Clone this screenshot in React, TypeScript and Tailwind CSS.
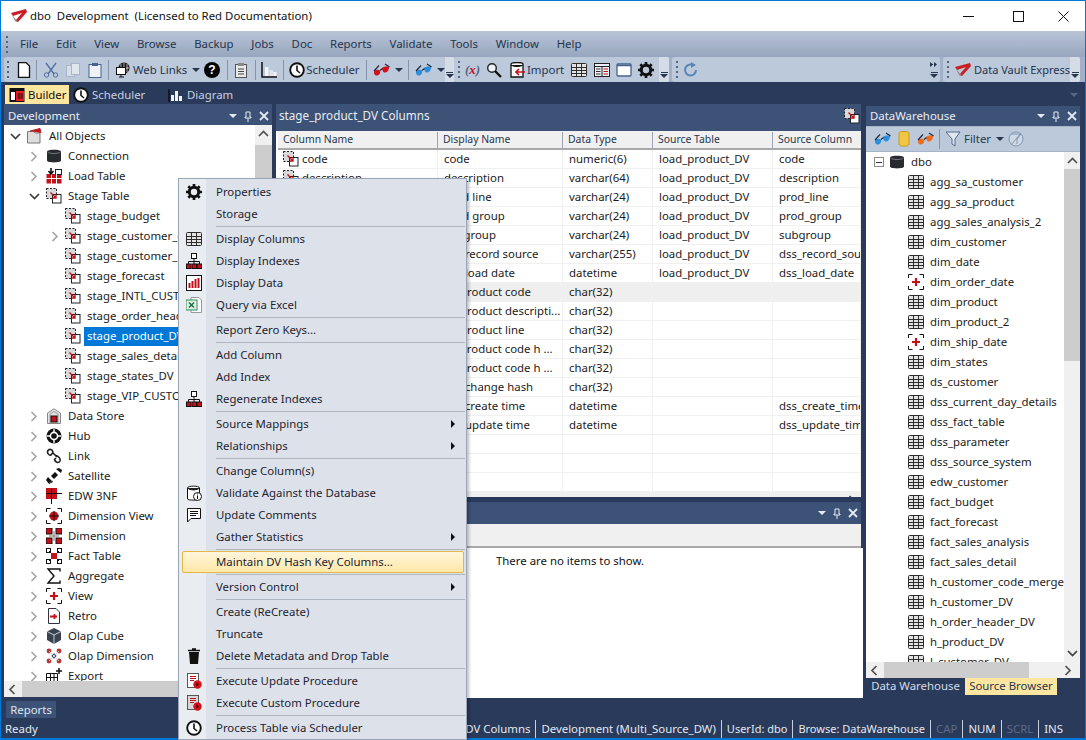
import React from "react";

type IP = { className?: string };
const S = ({ className = "", w = 16, h = 16, children }: { className?: string; w?: number; h?: number; children: React.ReactNode }) => (
  <svg width={w} height={h} viewBox={`0 0 ${w} ${h}`} fill="none" className={`shrink-0 ${className}`}>{children}</svg>
);
const R = "#c2111a";
const D = "#1d2129";

const Logo = ({ className }: IP) => (
  <S className={className} w={18} h={14}>
    <path d="M1 4 L16 0 L17 3 L8 13 L5 12 L12 4 L3 7 Z" fill="#c81e25" />
    <path d="M1 4 L5 12 L8 13 L3 7 Z" fill="#8d8d8d" />
  </S>
);
const Stage = ({ className }: IP) => (
  <S className={className}>
    <rect x="0.5" y="0.5" width="10" height="10" fill="#d8d8d8" stroke={D} strokeDasharray="2 1.5" />
    <rect x="6.5" y="6.5" width="8.5" height="8.5" fill="#fff" stroke={D} />
    <path d="M4.500 4.500L10 10M10 6.500V10H6.500" stroke={R} strokeWidth="1.400" />
  </S>
);
const Grid = ({ className }: IP) => (
  <S className={className}>
    <rect x="0.5" y="1.5" width="15" height="13" rx="1" fill="#e3e3e3" stroke="#2c2c2c" />
    <path d="M0.5 5.5H15.5M0.5 8.5H15.5M0.5 11.5H15.5M5.5 1.5V14.5M10.5 1.5V14.5" stroke="#2c2c2c" />
  </S>
);
const Cyl = ({ className }: IP) => (
  <S className={className}>
    <path d="M1 3.5C1 1 15 1 15 3.5V12.5C15 15 1 15 1 12.5Z" fill="#272b30" />
    <path d="M1.5 4C4 6 12 6 14.5 4" stroke="#777" />
  </S>
);
const Load = ({ className }: IP) => (
  <S className={className}>
    <rect x="0.5" y="6" width="15" height="9.5" fill={R} />
    <rect x="9.5" y="1.5" width="6" height="5" fill="#fff" stroke={D} />
    <path d="M0 10.5H16M5.5 6V16M10.5 6V16" stroke="#fff" />
    <path d="M5 0V6M2.5 3L5 6L7.5 3" stroke="#111" strokeWidth="1.6" />
  </S>
);
const Store = ({ className }: IP) => (
  <S className={className}>
    <path d="M1.5 15.5V5L8 0.8L14.5 5V15.5Z" fill="#e4e4e4" stroke="#888" />
    <path d="M4 15V6L8 3.5L12 6V15" stroke="#999" />
    <rect x="5" y="8" width="6" height="6" fill={R} stroke="#111" />
  </S>
);
const Hub = ({ className }: IP) => (
  <S className={className}>
    <circle cx="8" cy="8" r="7.5" fill="#111" />
    <circle cx="8" cy="8" r="3.6" stroke="#fff" strokeWidth="1.6" />
    <path d="M1 8H4M12 8H15M8 1V4M8 12V15" stroke="#fff" strokeWidth="1.3" />
  </S>
);
const Chain = ({ className }: IP) => (
  <S className={className}>
    <path d="M2 2.5C4-.5 8 3 6.5 5L5 7C3 7.500 .5 5 2 2.500Z M7 5L11 9 M9 8C11 6.500 15 10.500 14 13 C12.500 16 9 14 8.500 11.500 L10 10" stroke="#222" strokeWidth="1.6" />
  </S>
);
const Sat = ({ className }: IP) => (
  <S className={className}>
    <path d="M2 9L7 14L3 16L0 12Z M10 1L15 5L16 2L13 0Z" fill="#111" />
    <path d="M5 8L9 4L12 7L8 11Z" fill="#111" />
    <path d="M7 13L3 15" stroke="#555" />
  </S>
);
const Edw = ({ className }: IP) => (
  <S className={className}>
    <rect x="0" y="0" width="11" height="11" fill={R} />
    <path d="M5.500 0V16M0 5.500H16" stroke="#111" />
  </S>
);
const Brk = ({ children, className }: { children: React.ReactNode; className?: string }) => (
  <S className={className}>
    <path d="M0.5 4V0.500H4.500M11.500 0.500H15.500V4M15.500 12V15.500H11.500M4.500 15.500H0.500V12" stroke="#111" />
    {children}
  </S>
);
const DimV = ({ className }: IP) => (
  <Brk className={className}>
    <circle cx="8" cy="8" r="4.500" fill={R} />
    <path d="M8 3V13M3 8H13" stroke="#111" />
  </Brk>
);
const Dim = ({ className }: IP) => (
  <S className={className}>
    <rect x="0" y="0" width="6" height="6" fill={R} stroke="#111" />
    <rect x="10" y="0" width="6" height="6" fill={R} stroke="#111" />
    <rect x="0" y="10" width="6" height="6" fill={R} stroke="#111" />
    <rect x="10" y="10" width="6" height="6" fill={R} stroke="#111" />
    <path d="M3 8H13M8 3V13" stroke="#777" />
  </S>
);
const Fact = ({ className }: IP) => (
  <S className={className}>
    <rect x="0.500" y="0.500" width="4" height="4" fill="#fff" stroke="#111" />
    <rect x="11.500" y="0.500" width="4" height="4" fill="#fff" stroke="#111" />
    <rect x="0.500" y="11.500" width="4" height="4" fill="#fff" stroke="#111" />
    <rect x="11.500" y="11.500" width="4" height="4" fill="#fff" stroke="#111" />
    <path d="M3 3L13 13M13 3L3 13" stroke="#111" />
    <rect x="5" y="5" width="6" height="6" fill={R} />
  </S>
);
const Sigma = ({ className }: IP) => (
  <S className={className}>
    <path d="M14 3.500V1H2L8 8L2 15H14V12.500" stroke="#111" strokeWidth="1.400" />
  </S>
);
const ViewI = ({ className }: IP) => (
  <Brk className={className}>
    <path d="M8 4V12M4 8H12" stroke={R} strokeWidth="2.200" />
  </Brk>
);
const Retro = ({ className }: IP) => (
  <S className={className}>
    <path d="M2.500 0.500H10L13.500 4V15.500H2.500Z" fill="#fff" stroke="#334" />
    <path d="M4 8.500H11M8.500 6V11" stroke={R} strokeWidth="1.800" />
  </S>
);
const Cube = ({ className }: IP) => (
  <S className={className}>
    <path d="M8 0L15 3.500V12L8 16L1 12V3.500Z" fill="#39424e" />
    <path d="M1 3.500L8 7L15 3.500M8 7V16" stroke="#c8cdd4" />
  </S>
);
const OlapD = ({ className }: IP) => (
  <S className={className}>
    <circle cx="3" cy="3" r="2.400" fill="#b33" />
    <circle cx="13" cy="3" r="2.400" fill="#b33" />
    <circle cx="3" cy="13" r="2.400" fill="#b33" />
    <circle cx="13" cy="13" r="2.400" fill="#b33" />
    <circle cx="8" cy="8" r="2.400" fill="#3d566e" />
    <path d="M3 3L13 13M13 3L3 13" stroke="#ccc" />
  </S>
);
const Export = ({ className }: IP) => (
  <S className={className}>
    <path d="M0.500 15V5.500H11.500V15M0.500 9.500H11.500M4.500 5.500V15M8 5.500V15" stroke="#111" />
    <path d="M13 0V6M10 3H16" stroke="#111" strokeWidth="1.500" />
  </S>
);
const Gear = ({ className }: IP) => (
  <S className={className}>
    <circle cx="8" cy="8" r="4.700" stroke="#111" strokeWidth="3" />
    <path d="M8 0V3M8 13V16M0 8H3M13 8H16M2.300 2.300L4.400 4.400M11.600 11.600L13.700 13.700M13.700 2.300L11.600 4.400M4.400 11.600L2.300 13.700" stroke="#111" strokeWidth="2.700" />
  </S>
);
const Org = ({ className }: IP) => (
  <S className={className}>
    <rect x="5.500" y="0.500" width="5" height="5" fill="#fff" stroke="#111" />
    <path d="M8 5.500V9M2.500 11V8.500H13.500V11M8 9V11" stroke="#111" />
    <rect x="0.500" y="11" width="4.500" height="4.500" fill={R} stroke="#111" />
    <rect x="6" y="11" width="4.500" height="4.500" fill={R} stroke="#111" />
    <rect x="11.300" y="11" width="4.500" height="4.500" fill={R} stroke="#111" />
  </S>
);
const Bars = ({ className }: IP) => (
  <S className={className}>
    <rect x="0.500" y="0.500" width="15" height="15" fill="#fff" stroke="#111" />
    <path d="M3.500 13V8M6.500 13V6M9.500 13V4M12.500 13V3" stroke={R} strokeWidth="2" />
  </S>
);
const Excel = ({ className }: IP) => (
  <S className={className}>
    <path d="M5 0.500H13L15.500 3V15.500H5Z" fill="#fff" stroke="#999" />
    <rect x="0" y="3" width="11" height="10" fill="#e2f0e4" stroke="#2e8b57" />
    <path d="M3 5.500L8 10.500M8 5.500L3 10.500" stroke="#1d6f42" strokeWidth="1.500" />
  </S>
);
const DbInfo = ({ className }: IP) => (
  <S className={className}>
    <path d="M1.500 3C1.500 .5 13.500 .5 13.500 3V14C13.500 15.500 1.500 15.500 1.500 14Z" fill="#fff" stroke="#111" />
    <path d="M1.500 3C4 5.500 11 5.500 13.500 3" stroke="#111" fill="#222" />
    <circle cx="11.500" cy="11.500" r="4" fill="#fff" stroke="#111" />
    <path d="M11.500 10.500V14M11.500 8.500V9.500" stroke="#111" />
  </S>
);
const Comment = ({ className }: IP) => (
  <S className={className}>
    <path d="M1.500 1.500H14.500V11.500H5L1.500 15Z" fill="#fff" stroke="#111" />
    <path d="M4 4.500H12M4 6.500H12M4 8.500H10" stroke="#111" />
  </S>
);
const Trash = ({ className }: IP) => (
  <S className={className}>
    <path d="M3 4H13L12 16H4Z" fill="#111" />
    <path d="M2 2.500H14M6 1H10" stroke="#111" strokeWidth="1.600" />
  </S>
);
const Proc = ({ className, grey }: IP & { grey?: boolean }) => (
  <S className={className}>
    <rect x="1.500" y="0.500" width="11" height="14" fill={grey ? "#d8d8d8" : "#fff"} stroke="#555" />
    <path d="M4 3.500H10M4 5.500H10M4 7.500H8" stroke={R} />
    <circle cx="11.500" cy="11.500" r="4.200" fill="#d8101a" />
    <path d="M10.500 9.500L13 11.500L10.500 13.500Z" fill="#111" />
  </S>
);
const Clock = ({ className }: IP) => (
  <S className={className}>
    <circle cx="8" cy="8" r="6.800" fill="#fff" stroke="#111" strokeWidth="1.900" />
    <path d="M8 3.500V8.500L11 11" stroke="#111" strokeWidth="1.600" />
  </S>
);
const Glasses = ({ className, c }: IP & { c: string }) => (
  <S className={className} w={18} h={14}>
    <path d="M1 9C1 7 5 6 7 7.500C8 11 5 13 3 12.500C1.500 12 1 11 1 9Z" fill={c} />
    <path d="M9 5C11 3 15 3 16 4.500C16 8 13 10 11 9.500C10 9 9 7 9 5Z" fill={c} />
    <path d="M1 8L6 2.500M7 7.500L9.500 5.500M16.500 4L12 1" stroke="#1f2a3a" strokeWidth="1.200" />
  </S>
);
const Caret = ({ className = "" }: IP) => (
  <span className={`shrink-0 w-0 h-0 border-l-[4px] border-r-[4px] border-t-[4px] border-l-transparent border-r-transparent border-t-[#26364f] ${className}`} />
);
const Grip = ({ className = "" }: IP) => (
  <span className={`shrink-0 flex flex-col gap-[3px] ${className}`}>
    <i className="block w-[2px] h-[2px] bg-[#56657e]" />
    <i className="block w-[2px] h-[2px] bg-[#56657e]" />
    <i className="block w-[2px] h-[2px] bg-[#56657e]" />
    <i className="block w-[2px] h-[2px] bg-[#56657e]" />
  </span>
);
const Sep = ({ className = "" }: IP) => <span className={`shrink-0 w-px h-[20px] bg-[#8594aa] ${className}`} />;
const Over = ({ className = "" }: IP) => (
  <span className={`shrink-0 self-stretch w-[10px] flex flex-col items-center justify-end pb-[4px] gap-[1px] rounded-r-[2px] ${className}`}>
    <i className="block w-[7px] h-px bg-[#26364f]" />
    <Caret className="border-l-[3px] border-r-[3px] border-t-[3px]" />
  </span>
);
const Chev = ({ dir = "r", className = "" }: IP & { dir?: "r" | "d" | "l" | "u" }) => {
  const p = { r: "M2.500 1L7 5.500L2.500 10", d: "M1 3L5.500 7.500L10 3", l: "M7.500 1L3 5.500L7.500 10", u: "M1 8L5.500 3.500L10 8" }[dir];
  const col = dir === "d" ? "#3f3f3f" : dir === "r" ? "#a6a6a6" : "#505050";
  return (
    <svg width="11" height="11" viewBox="0 0 11 11" fill="none" className={`shrink-0 ${className}`}>
      <path d={p} stroke={col} strokeWidth="1.700" />
    </svg>
  );
};
const PaneBtns = () => (
  <span className="ml-auto flex items-center gap-[7px] mr-[3px]">
    <Caret className="border-t-[#e6ebf3] border-l-[3px] border-r-[3px] border-t-[3px]" />
    <svg width="8" height="11" viewBox="0 0 8 11" fill="none"><path d="M2 1H6V6H7V7H1V6H2ZM4 7V11" stroke="#e6ebf3" /></svg>
    <svg width="10" height="10" viewBox="0 0 10 10" fill="none"><path d="M1 1L9 9M9 1L1 9" stroke="#e6ebf3" strokeWidth="1.800" /></svg>
  </span>
);

const menus = ["File", "Edit", "View", "Browse", "Backup", "Jobs", "Doc", "Reports", "Validate", "Tools", "Window", "Help"];

const treeTop: [React.FC<IP>, string][] = [
  [Cyl, "Connection"],
  [Load, "Load Table"],
];
const stages: [string, boolean?, boolean?][] = [
  ["stage_budget"],
  ["stage_customer_code_merge", true],
  ["stage_customer_DV"],
  ["stage_forecast"],
  ["stage_INTL_CUSTOMERS"],
  ["stage_order_header_DV"],
  ["stage_product_DV", false, true],
  ["stage_sales_detail_DV"],
  ["stage_states_DV"],
  ["stage_VIP_CUSTOMERS"],
];
const treeBottom: [React.FC<IP>, string][] = [
  [Store, "Data Store"],
  [Hub, "Hub"],
  [Chain, "Link"],
  [Sat, "Satellite"],
  [Edw, "EDW 3NF"],
  [DimV, "Dimension View"],
  [Dim, "Dimension"],
  [Fact, "Fact Table"],
  [Sigma, "Aggregate"],
  [ViewI, "View"],
  [Retro, "Retro"],
  [Cube, "Olap Cube"],
  [OlapD, "Olap Dimension"],
  [Export, "Export"],
];

const columns = [
  ["code", "code", "numeric(6)", "load_product_DV", "code"],
  ["description", "description", "varchar(64)", "load_product_DV", "description"],
  ["prod_line", "prod line", "varchar(24)", "load_product_DV", "prod_line"],
  ["prod_group", "prod group", "varchar(24)", "load_product_DV", "prod_group"],
  ["subgroup", "subgroup", "varchar(24)", "load_product_DV", "subgroup"],
  ["dss_record_source", "dss record source", "varchar(255)", "load_product_DV", "dss_record_source"],
  ["dss_load_date", "dss load date", "datetime", "load_product_DV", "dss_load_date"],
  ["hk_product_code", "hk product code", "char(32)", "", ""],
  ["hk_product_description", "hk product descripti...", "char(32)", "", ""],
  ["hk_product_line", "hk product line", "char(32)", "", ""],
  ["hk_product_code_h", "dv product code h ...", "char(32)", "", ""],
  ["hk_product_code_h2", "dv product code h ...", "char(32)", "", ""],
  ["dss_change_hash", "dss change hash", "char(32)", "", ""],
  ["dss_create_time", "dss create time", "datetime", "", "dss_create_time"],
  ["dss_update_time", "dss update time", "datetime", "", "dss_update_time"],
  ["", "", "", "", ""],
  ["", "", "", "", ""],
  ["", "", "", "", ""],
];
const colW = ["w-[160px]", "w-[125px]", "w-[90px]", "w-[120px]", "flex-1"];

const dw: [string, boolean?][] = [
  ["agg_sa_customer"], ["agg_sa_product"], ["agg_sales_analysis_2"], ["dim_customer"], ["dim_date"],
  ["dim_order_date", true], ["dim_product"], ["dim_product_2"], ["dim_ship_date", true], ["dim_states"],
  ["ds_customer"], ["dss_current_day_details"], ["dss_fact_table"], ["dss_parameter"], ["dss_source_system"],
  ["edw_customer"], ["fact_budget"], ["fact_forecast"], ["fact_sales_analysis"], ["fact_sales_detail"],
  ["h_customer_code_merge"], ["h_customer_DV"], ["h_order_header_DV"], ["h_product_DV"], ["l_customer_DV"],
];

type M = { t?: string; i?: React.ReactNode; sub?: boolean; hot?: boolean } | "sep";
const menu: M[] = [
  { t: "Properties", i: <Gear /> }, { t: "Storage" }, "sep",
  { t: "Display Columns", i: <Grid /> }, { t: "Display Indexes", i: <Org /> }, { t: "Display Data", i: <Bars /> }, { t: "Query via Excel", i: <Excel /> }, "sep",
  { t: "Report Zero Keys..." }, "sep",
  { t: "Add Column" }, { t: "Add Index" }, { t: "Regenerate Indexes", i: <Org /> }, "sep",
  { t: "Source Mappings", sub: true }, { t: "Relationships", sub: true }, "sep",
  { t: "Change Column(s)" }, { t: "Validate Against the Database", i: <DbInfo /> }, { t: "Update Comments", i: <Comment /> }, { t: "Gather Statistics", sub: true }, "sep",
  { t: "Maintain DV Hash Key Columns...", hot: true }, "sep",
  { t: "Version Control", sub: true }, "sep",
  { t: "Create (ReCreate)" }, { t: "Truncate" }, { t: "Delete Metadata and Drop Table", i: <Trash /> }, "sep",
  { t: "Execute Update Procedure", i: <Proc /> }, { t: "Execute Custom Procedure", i: <Proc grey /> }, "sep",
  { t: "Process Table via Scheduler", i: <Clock /> },
];

const status: [string, boolean?, boolean?][] = [
  ["stage_product_DV Columns"], ["Development (Multi_Source_DW)"], ["UserId: dbo", false, true], ["Browse: DataWarehouse", false, true], ["CAP", true], ["NUM"], ["SCRL", true], ["INS"],
];

export default function App() {
  return (
    <div className="relative w-[1086px] h-[740px] overflow-hidden flex flex-col bg-[#2a3a5a] border-x border-t border-[#0078d7] font-['Noto_Sans',sans-serif] text-[11.4px] leading-none text-[#1b1b1b]">
      {/* title */}
      <div className="h-[30px] shrink-0 bg-white flex items-center text-[#111]">
        <Logo className="ml-[9px]" />
        <span className="ml-[2px] whitespace-pre">dbo  Development  (Licensed to Red Documentation)</span>
        <svg width="11" height="11" viewBox="0 0 11 11" className="ml-auto mr-[39px]"><path d="M0 5.500H11" stroke="#111" /></svg>
        <svg width="11" height="11" viewBox="0 0 11 11" fill="none" className="mr-[34px]"><rect x="0.500" y="0.500" width="10" height="10" stroke="#111" /></svg>
        <svg width="11" height="11" viewBox="0 0 11 11" fill="none" className="mr-[16px]"><path d="M0.500 0.500L10.500 10.500M10.500 0.500L0.500 10.500" stroke="#111" /></svg>
      </div>
      {/* menu */}
      <div className="h-[26px] shrink-0 bg-gradient-to-b from-[#b9c4d6] to-[#97a6be] flex items-center pl-[5px] text-[#24344f]">
        <Grip className="mr-[12px]" />
        <div className="flex gap-[17.8px]">
          {menus.map((m) => <span key={m}>{m}</span>)}
        </div>
      </div>
      {/* toolbars */}
      <div className="h-[25px] shrink-0 bg-[#a3b1c6] flex pr-[5px] pl-[3px] gap-[3px] text-[#24344f] whitespace-nowrap">
        <div className="w-[447px] bg-[#bcc9da] rounded-[3px] flex items-center pl-[3px]">
          <Grip />
          <S className="ml-[7px]"><path d="M2.500 .5H10L13.500 4V15.500H2.500Z" fill="#fff" stroke="#111" strokeWidth="1.300" /></S>
          <Sep className="ml-[4px]" />
          <S className="ml-[6px]"><path d="M3 1L11 12M13 1L5 12" stroke="#4f6f9d" strokeWidth="1.300" /><circle cx="3.500" cy="13" r="2.200" stroke="#4f6f9d" /><circle cx="12.500" cy="13" r="2.200" stroke="#4f6f9d" /></S>
          <S className="ml-[6px]"><rect x="1.500" y="3.500" width="8" height="11" fill="#d7dfe9" stroke="#a9b6c8" /><rect x="6.500" y="1.500" width="8" height="11" fill="#dfe6ee" stroke="#a9b6c8" /></S>
          <S className="ml-[6px]"><rect x="2" y="2.500" width="12" height="13" fill="#eef2f6" stroke="#44638f" /><rect x="5" y="1" width="6" height="3" fill="#44638f" /></S>
          <Sep className="ml-[5px]" />
          <S className="ml-[6px]"><circle cx="9" cy="6" r="5.500" fill="#111" /><path d="M4 6H14M9 1V11M6 2L6 10M12 2V10" stroke="#fff" strokeWidth=".7" /><rect x="1.500" y="5.500" width="9" height="7" fill="#fff" stroke="#111" /><path d="M4 15H9M6 13V15" stroke="#111" /></S>
          <span className="ml-[2px]">Web Links</span>
          <Caret className="ml-[5px]" />
          <S className="ml-[4px]"><circle cx="8" cy="8" r="8" fill="#050505" /><text x="8" y="12" textAnchor="middle" fontSize="12" fontWeight="700" fill="#fff" fontFamily="Liberation Sans">?</text></S>
          <Sep className="ml-[7px]" />
          <S className="ml-[5px]"><rect x="2.500" y="2.500" width="11" height="13" fill="#e9e9e9" stroke="#555" /><rect x="5" y="1" width="6" height="3" fill="#888" /><path d="M5 7H11M5 9.500H11M5 12H11" stroke="#444" /></S>
          <Sep className="ml-[6px]" />
          <S className="ml-[5px]"><path d="M1 0V15H16" stroke="#111" strokeWidth="1.500" /><rect x="4" y="5" width="3.500" height="9" fill="#f5f5f5" /><rect x="8.500" y="8" width="3.500" height="6" fill="#dfe5ec" /><rect x="12.500" y="10" width="3" height="4" fill="#f5f5f5" /></S>
          <Sep className="ml-[6px]" />
          <Clock className="ml-[5px]" />
          <span className="ml-[1px]">Scheduler</span>
          <Sep className="ml-[6px]" />
          <Glasses c="#d6101a" className="ml-[6px]" />
          <Caret className="ml-[4px]" />
          <Sep className="ml-[5px]" />
          <Glasses c="#2a8fdc" className="ml-[6px]" />
          <Caret className="ml-[4px]" />
          <Over className="ml-auto bg-[#d3dce7]" />
        </div>
        <div className="w-[216px] bg-[#bcc9da] rounded-[3px] flex items-center pl-[4px]">
          <Grip />
          <span className="ml-[5px] w-[16px] text-[13px] font-bold italic text-[#52667f] font-['Liberation_Serif',serif] whitespace-pre">(<span className="text-[#c2111a]">x</span>)</span>
          <S className="ml-[5px]"><circle cx="6" cy="6" r="4.300" fill="#eef2f7" stroke="#222" strokeWidth="1.400" /><path d="M9 9L15 15" stroke="#111" strokeWidth="2.400" /></S>
          <S className="ml-[7px]"><path d="M2 2C2 0 14 0 14 2V15H2Z" fill="#fff" stroke="#111" strokeWidth="1.300" /><path d="M2 3C5 5 11 5 14 3" fill="#111" stroke="#111" /><path d="M16 10H7M10 7L7 10L10 13" stroke={R} strokeWidth="1.700" /></S>
          <span className="ml-[2px]">Import</span>
          <Grid className="ml-[7px]" />
          <S className="ml-[7px]"><rect x="0.500" y="1.500" width="15" height="13" fill="#edf0f4" stroke="#222" /><path d="M0.500 4.500H15.500M8 4.500V14.500" stroke="#222" /><path d="M2 7H6.500M2 9.500H6.500M2 12H6.500" stroke="#333" /><path d="M9.500 7H14M9.500 9.500H14M9.500 12H14" stroke={R} /></S>
          <S className="ml-[6px]"><rect x="1" y="2" width="14" height="12" rx="1" fill="#fff" stroke="#44618c" strokeWidth="1.300" /><path d="M1 3.500H15" stroke="#44618c" strokeWidth="1.500" /></S>
          <Gear className="ml-[6px]" />
          <Over className="ml-auto bg-[#d3dce7]" />
        </div>
        <div className="w-[269px] bg-[#bcc9da] rounded-[3px] flex items-center pl-[4px]">
          <Grip />
          <S className="ml-[5px]"><path d="M13 8A5.500 5.500 0 1 1 9 2.700" stroke="#5a83b8" strokeWidth="2" /><path d="M8 0L13 3L8 6Z" fill="#5a83b8" /></S>
          <span className="ml-auto self-stretch flex flex-col items-center justify-between py-[4px] pr-[1px]">
            <svg width="8" height="7" viewBox="0 0 8 7"><path d="M0 1L3 3.500L0 6ZM4 1L7 3.500L4 6Z" fill="#26364f" /><path d="M3 3.500H0" stroke="#26364f" /></svg>
            <Over className="!self-auto !pb-0" />
          </span>
        </div>
        <div className="flex-1 bg-[#bcc9da] rounded-[3px] flex items-center pl-[4px]">
          <Grip />
          <Logo className="ml-[5px]" />
          <span className="ml-[2px] text-[11px]">Data Vault Express</span>
          <Over className="ml-auto bg-[#d3dce7]" />
        </div>
      </div>
      {/* doc tabs */}
      <div className="h-[22px] shrink-0 flex items-center pl-[4px] pt-[3px] text-[#c7d1e0] relative">
        <span className="h-[19px] w-[64px] bg-[#ffe6a0] flex items-center pl-[4px] gap-[3px] text-[#111]">
          <S><rect x="0.500" y="1" width="15" height="14" fill="#111" /><rect x="2" y="5" width="4" height="8" fill="#fff" /><rect x="7" y="4" width="8" height="10" fill="#ef1c24" /><path d="M8.500 7H14M8.500 9H14M8.500 11H14" stroke="#111" /></S>
          Builder
        </span>
        <span className="ml-[4px] flex items-center gap-[3px] w-[95px]"><Clock />Scheduler</span>
        <span className="flex items-center gap-[3px]">
          <S><path d="M1 2V15" stroke="#111" strokeWidth="1.500" /><rect x="3" y="8" width="3" height="6" fill="#f4f4f4" /><rect x="7" y="4" width="3" height="10" fill="#f4f4f4" /><rect x="11" y="9" width="3" height="5" fill="#f4f4f4" /></S>
          Diagram
        </span>
        <Caret className="ml-auto mr-[7px] border-t-[#566885]" />
      </div>
      {/* main */}
      <div className="flex-1 min-h-0 flex pl-[3px] pr-[5px]">
        {/* left */}
        <div className="w-[268px] shrink-0 flex flex-col">
          <div className="h-[21px] shrink-0 bg-[#3d5277] flex items-center pl-[4px] pt-[3px] text-[#e8edf4]">
            Development<PaneBtns />
          </div>
          <div className="h-[556px] shrink-0 bg-white flex overflow-hidden">
            <div className="flex-1 min-w-0 pt-[1px] overflow-hidden">
              <TreeRow pad="pl-[6px]" chev="d" icon={<S className="ml-[6px]"><path d="M.5 3.500H7L8 5H13V15H.5Z" fill="#ddd" stroke="#777" /><path d="M3 3L13 .5L14 5" fill="#c9141c" stroke="#a22" /></S>} text="All Objects" />
              {treeTop.map(([I, t]) => <TreeRow key={t} pad="pl-[25px]" chev="r" icon={<I className="ml-[6px]" />} text={t} />)}
              <TreeRow pad="pl-[25px]" chev="d" icon={<Stage className="ml-[6px]" />} text="Stage Table" />
              {stages.map(([t, ch, sel]) => (
                <TreeRow key={t} pad="pl-[46px]" chev={ch ? "r" : undefined} icon={<Stage className={ch ? "ml-[4px]" : "ml-[15px]"} />} text={t} sel={sel} />
              ))}
              {treeBottom.map(([I, t]) => <TreeRow key={t} pad="pl-[25px]" chev="r" icon={<I className="ml-[6px]" />} text={t} />)}
            </div>
            <div className="w-[17px] shrink-0 bg-[#f0f0f0] flex flex-col items-center">
              <Chev dir="u" className="mt-[3px]" />
              <div className="w-full h-[170px] mt-[6px] bg-[#cdcdcd]" />
            </div>
          </div>
          <div className="h-[16px] shrink-0 bg-[#f0f0f0] flex items-center">
            <Chev dir="l" className="ml-[3px]" />
            <div className="ml-[4px] flex-1 h-full bg-[#cdcdcd] mr-[18px]" />
          </div>
          <div className="flex-1 flex items-end pl-[2px] pb-[1px]">
            <span className="h-[17px] w-[50px] bg-[#3d5277] rounded-t-[1px] flex items-center justify-center text-[#dfe6f0]">Reports</span>
          </div>
        </div>
        {/* center */}
        <div className="ml-[4px] w-[585px] shrink-0 flex flex-col">
          <div className="h-[27px] shrink-0 bg-[#3d5277] flex items-center pl-[3px] pb-[3px] text-[11.7px] text-[#e8edf4] relative">
            stage_product_DV Columns
            <Stage className="ml-auto mr-[1px]" />
          </div>
          <div className="h-[366px] shrink-0 bg-white flex flex-col pl-[2px] overflow-hidden">
            <div className="h-[19px] shrink-0 bg-[#f0f0f0] border-b-[2px] border-[#a9a9a9] flex items-center text-[10.4px] text-[#26364f]">
              {["Column Name", "Display Name", "Data Type", "Source Table", "Source Column"].map((h, i) => (
                <span key={h} className={`${colW[i]} h-[16px] flex items-center pl-[5px] ${i < 4 ? "border-r border-[#9aa3af]" : ""}`}>{h}</span>
              ))}
            </div>
            {columns.map((r, ri) => (
              <div key={ri} className={`h-[19px] shrink-0 flex items-center border-b border-[#f0f0f0] ${ri === 7 ? "bg-[#efefef]" : ""}`}>
                {r.map((c, i) => (
                  <span key={i} className={`${colW[i]} h-full flex items-center border-r border-[#f0f0f0] whitespace-nowrap overflow-hidden ${i === 0 ? "pl-[5px]" : "pl-[6px]"}`}>
                    {i === 0 && ri < 15 ? <Stage className="mr-[3px]" /> : null}{c}
                  </span>
                ))}
              </div>
            ))}
            <div className="mt-auto h-[16px] shrink-0 bg-[#f0f0f0] flex items-center justify-end pr-[3px]"><Chev dir="r" className="[&>path]:stroke-[#505050]" /></div>
          </div>
          <div className="h-[5px] shrink-0" />
          <div className="h-[22px] shrink-0 bg-[#3d5277] flex items-center"><PaneBtns /></div>
          <div className="h-[24px] shrink-0 bg-[#f0f0f0] border-b-[2px] border-[#a9a9a9]" />
          <div className="h-[150px] shrink-0 bg-white pl-[220px] pt-[7px] w-[587px] text-[#111]">There are no items to show.</div>
        </div>
        {/* right */}
        <div className="ml-[5px] flex-1 min-w-0 flex flex-col">
          <div className="h-[20px] mt-[2px] shrink-0 bg-[#3d5277] flex items-center pl-[4px] text-[#e8edf4]">
            DataWarehouse<PaneBtns />
          </div>
          <div className="h-[26px] shrink-0 bg-[#bcc9da] border-y border-[#a6b4c8] flex items-center pl-[8px] text-[#26364f]">
            <Glasses c="#2a8fdc" />
            <S className="ml-[4px]"><path d="M3 2C3 0 13 0 13 2V13C13 16 3 16 3 13Z" fill="#f4c542" stroke="#c99a22" /></S>
            <Glasses c="#ef6a1a" className="ml-[5px]" />
            <Sep className="ml-[4px]" />
            <S className="ml-[6px]"><path d="M0 1H14L9 8V15L6 13V8Z" fill="#dfe7f0" stroke="#506a8e" /></S>
            <span className="ml-[2px]">Filter</span>
            <Caret className="ml-[5px]" />
            <S className="ml-[4px]"><circle cx="8" cy="8" r="7" fill="#cfd9e5" stroke="#8096b3" /><path d="M3 3H13L9 8V13M3 14L13 2" stroke="#8096b3" /></S>
          </div>
          <div className="h-[510px] shrink-0 bg-white flex overflow-hidden">
            <div className="flex-1 min-w-0 overflow-hidden">
              <div className="h-[20px] flex items-center pl-[8px]">
                <span className="w-[10px] h-[10px] border border-[#8a8a8a] flex items-center justify-center shrink-0"><i className="block w-[6px] h-px bg-[#333]" /></span>
                <Cyl className="ml-[5px]" />
                <span className="ml-[6px]">dbo</span>
              </div>
              {dw.map(([t, v]) => (
                <div key={t} className="h-[20px] flex items-center pl-[42px] whitespace-nowrap">
                  {v ? <ViewI /> : <Grid />}
                  <span className="ml-[6px]">{t}</span>
                </div>
              ))}
            </div>
            <div className="w-[16px] shrink-0 bg-[#f0f0f0] flex flex-col items-center">
              <Chev dir="u" className="mt-[3px]" />
              <div className="w-full h-[192px] mt-[3px] bg-[#cdcdcd]" />
              <Chev dir="d" className="mt-auto mb-[3px]" />
            </div>
          </div>
          <div className="h-[16px] shrink-0 bg-[#f0f0f0] flex items-center">
            <Chev dir="l" className="ml-[3px]" />
            <div className="ml-[4px] w-[145px] h-full bg-[#cdcdcd]" />
            <Chev dir="r" className="ml-auto mr-[6px] [&>path]:stroke-[#505050]" />
          </div>
          <div className="h-[17px] shrink-0 flex">
            <span className="w-[99px] flex items-center justify-center pb-[1px] text-[#d3dbe7]">Data Warehouse</span>
            <span className="w-[92px] bg-[#ffe6a0] flex items-center justify-center pb-[1px] text-[#26364f]">Source Browser</span>
          </div>
        </div>
      </div>
      {/* status */}
      <div className="h-[19px] shrink-0 flex items-center pl-[4px] pr-[17px] text-[#e4e9f1]">
        Ready
        <div className="ml-auto flex items-center h-full">
          {status.map(([t, dim, small], i) => (
            <span key={t} className={`h-[18px] flex items-center px-[5px] ${i < status.length - 1 ? "border-r border-[#c8d0dc]" : ""} ${dim ? "text-[#5d6d88]" : ""} ${small ? "text-[11px]" : ""}`}>{t}</span>
          ))}
        </div>
      </div>
      <div className="h-[2px] shrink-0 bg-[#0078d7]" />
      {/* context menu */}
      <div className="absolute left-[177px] top-[177px] w-[289px] bg-[#dde2ea] border border-[#9aa5b6] pt-[2px] pl-[1px] shadow-[2px_2px_3px_rgba(0,0,0,0.25)] text-[#1d2230] bg-[linear-gradient(to_right,#e9edf2_27px,#dde2ea_27px)]">
        {menu.map((m, i) =>
          m === "sep" ? (
            <div key={i} className="h-[3px] flex items-center pl-[36px] pr-[1px]"><i className="block w-full h-px bg-[#aeb6c2]" /></div>
          ) : (
            <div key={i} className={`h-[22px] flex items-center relative ${m.hot ? "mx-[2px] border border-[#e2b84d] rounded-[2px] bg-gradient-to-b from-[#fff6da] to-[#ffe7a8]" : ""}`}>
              <span className={`shrink-0 flex justify-center ${m.hot ? "w-[24px]" : "w-[27px]"}`}>{m.i}</span>
              <span className="ml-[9px]">{m.t}</span>
              {m.sub ? <span className="ml-auto mr-[11px] w-0 h-0 border-y-[4px] border-l-[4px] border-y-transparent border-l-[#111]" /> : null}
            </div>
          ),
        )}
      </div>
    </div>
  );
}

function TreeRow({ pad, chev, icon, text, sel }: { pad: string; chev?: "r" | "d"; icon: React.ReactNode; text: string; sel?: boolean }) {
  return (
    <div className={`h-[20px] flex items-center whitespace-nowrap ${pad}`}>
      {chev ? <Chev dir={chev} /> : null}
      {icon}
      <span className={`ml-[3px] h-[19px] flex items-center px-[3px] ${sel ? "bg-[#0078d7] text-white" : ""}`}>{text}</span>
    </div>
  );
}
